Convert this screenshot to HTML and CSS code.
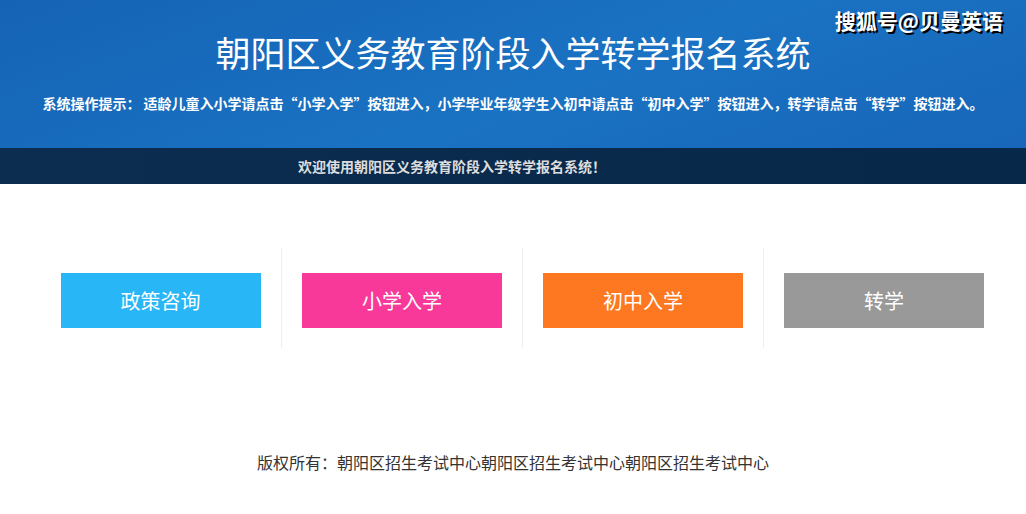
FILE: index.html
```html
<!DOCTYPE html>
<html lang="zh-CN">
<head>
    <meta charset="UTF-8">
    <meta name="viewport" content="width=device-width, initial-scale=1.0">
    <title>朝阳区义务教育阶段入学转学报名系统</title>
    <link rel="stylesheet" href="styles.css">
</head>
<body>
    <!-- 顶部标题 -->
    <div class="header">
        <div class="watermark">搜狐号@贝曼英语</div>
        <h1>朝阳区义务教育阶段入学转学报名系统</h1>
        <p class="tips">系统操作提示： 适龄儿童入小学请点击“小学入学”按钮进入，小学毕业年级学生入初中请点击“初中入学”按钮进入，转学请点击“转学”按钮进入。</p>
    </div>
    <div class="welcome">
        <span>欢迎使用朝阳区义务教育阶段入学转学报名系统！</span>
    </div>

    <!-- 入口按钮 -->
    <div class="entry">
        <div class="entry-item"><a class="btn btn-policy" href="#">政策咨询</a></div>
        <div class="entry-item"><a class="btn btn-primary" href="#">小学入学</a></div>
        <div class="entry-item"><a class="btn btn-middle" href="#">初中入学</a></div>
        <div class="entry-item"><a class="btn btn-transfer" href="#">转学</a></div>
    </div>

    <div class="footer">版权所有：朝阳区招生考试中心朝阳区招生考试中心朝阳区招生考试中心</div>
</body>
</html>
```

FILE: styles.css
```css
body {
    margin: 0;
    font-family: "Noto Sans CJK SC", "Noto Sans", sans-serif;
    background-color: #ffffff;
    color: #333333;
}
.header {
    position: relative;
    height: 148px;
    background: linear-gradient(160deg, #1563b5 0%, #1a72c2 55%, #1766ba 100%);
    text-align: center;
    color: #ffffff;
    overflow: hidden;
}
.header h1 {
    margin: 0;
    padding-top: 27px;
    font-size: 35px;
    font-weight: normal;
    line-height: 50px;
}
.tips {
    margin: 16px 0 0;
    font-size: 14px;
    font-weight: bold;
    line-height: 20px;
}
.watermark {
    position: absolute;
    top: 5px;
    right: 23px;
    font-size: 21px;
    font-weight: bold;
    color: #ffffff;
    text-shadow: 2px 2px 0 #000000;
}
.welcome {
    height: 36px;
    line-height: 36px;
    background: linear-gradient(to right, #0c2d50, #082849);
    color: #dddddd;
    font-size: 14px;
    font-weight: bold;
    padding-left: 298px;
}
/* 入口 */
.entry {
    display: flex;
    margin-top: 64px;
    padding-left: 40px;
}
.entry-item {
    width: 241px;
    height: 100px;
    padding-top: 25px;
    box-sizing: border-box;
    border-left: 1px solid #eeeeee;
    display: flex;
    justify-content: center;
}
.entry-item:first-child {
    border-left: none;
}
.btn {
    display: block;
    width: 200px;
    height: 55px;
    line-height: 55px;
    text-align: center;
    font-size: 20px;
    color: #ffffff;
    text-decoration: none;
}
.btn-policy {
    background-color: #29b6f6;
}
.btn-primary {
    background-color: #f8399a;
}
.btn-middle {
    background-color: #fd7820;
}
.btn-transfer {
    background-color: #999999;
}
.footer {
    margin-top: 102px;
    text-align: center;
    font-size: 16px;
    line-height: 24px;
    color: #333333;
}
```
